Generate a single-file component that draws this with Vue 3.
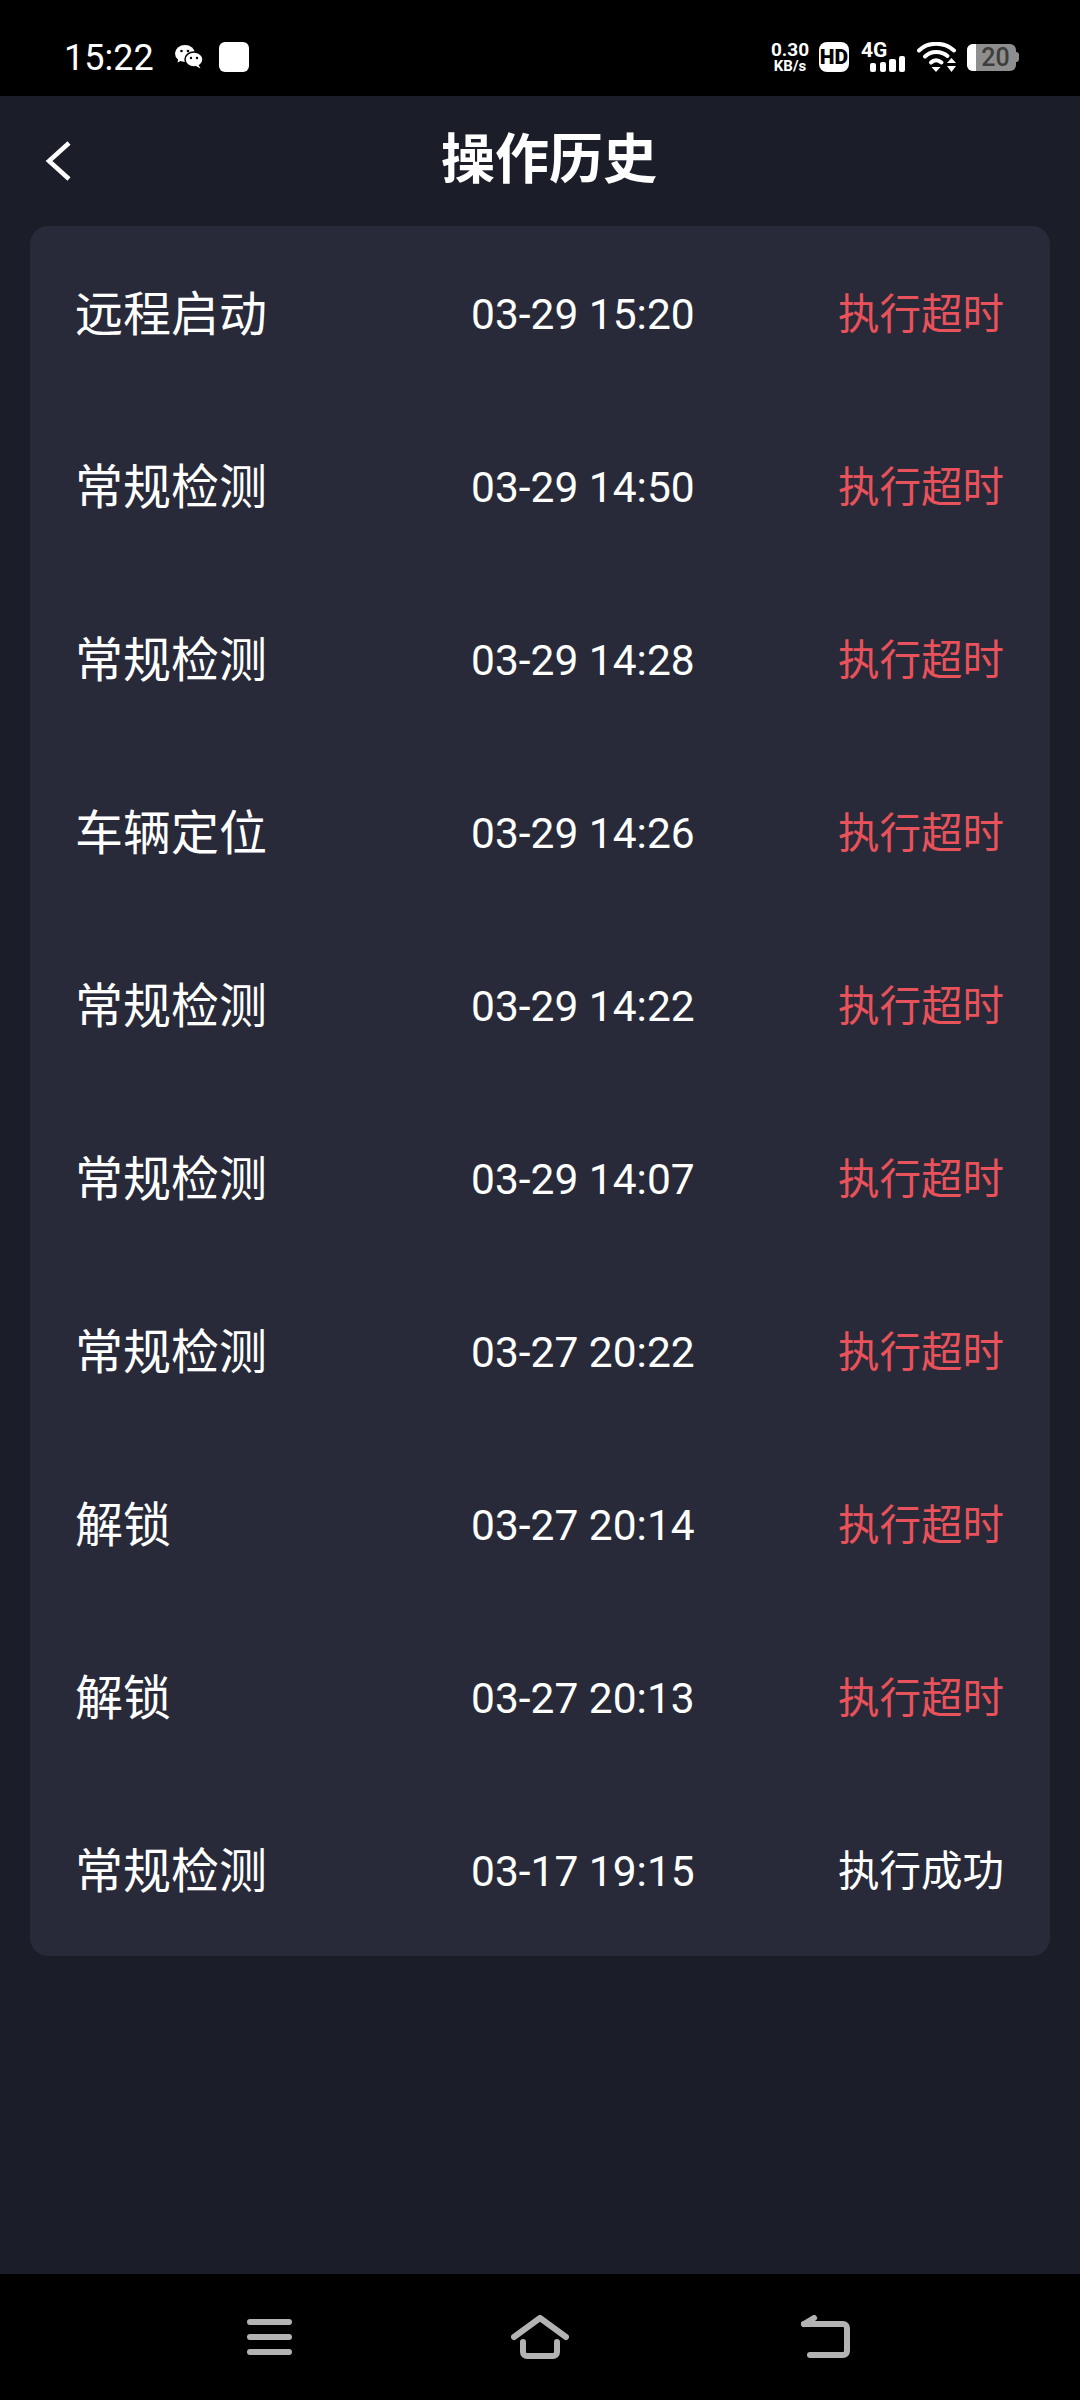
<template>
  <div class="screen">
    <div class="status">
      <div class="status__left">
        <span class="status__time">15:22</span>
        <svg class="wechat" width="28" height="24" viewBox="0 0 28 24" fill="#fff">
          <ellipse cx="10" cy="8.5" rx="10" ry="8.5"/>
          <path d="M3.5 13l-1 4.5 5-2.5z"/>
          <ellipse cx="19" cy="14.5" rx="9" ry="7.5" stroke="#000" stroke-width="1.5"/>
          <path d="M23 19l2.5 4.5-5.5-3z"/>
          <circle cx="6.5" cy="6" r="1.3" fill="#000"/>
          <circle cx="13" cy="6" r="1.3" fill="#000"/>
          <circle cx="16" cy="13" r="1.2" fill="#000"/>
          <circle cx="22" cy="13" r="1.2" fill="#000"/>
        </svg>
        <span class="status__app"></span>
      </div>
      <div class="status__right">
        <div class="speed">
          <span class="speed__num">0.30</span>
          <span class="speed__unit">KB/s</span>
        </div>
        <span class="hd">HD</span>
        <div class="signal">
          <span class="signal__label">4G</span>
          <svg class="signal__bars" width="36" height="16" viewBox="0 0 36 16" fill="#fff">
            <rect x="0" y="7" width="6" height="9" rx="2"/>
            <rect x="10" y="6" width="6" height="10" rx="2"/>
            <rect x="19" y="3" width="7" height="13" rx="2"/>
            <rect x="29" y="0" width="6" height="16" rx="2"/>
          </svg>
        </div>
        <svg class="wifi" width="40" height="30" viewBox="0 0 40 30" fill="none" stroke="#fff" stroke-width="4" stroke-linecap="round">
          <path d="M2 8.500C11 -0.500 27 -0.500 37 8.500"/>
          <path d="M8 14.500C14 8.500 24 8.500 30.500 14"/>
          <path d="M14 20.500C17 17.500 21 17.500 24.500 20.500"/>
          <path d="M14.500 25h9l-4.500 5z" fill="#fff" stroke="none"/>
          <path d="M30 21l4.500-5 4.500 5z" fill="#fff" stroke="none"/>
          <path d="M30 24h9l-4.500 6z" fill="#fff" stroke="none"/>
        </svg>
        <div class="battery">
          <div class="battery__body">
            <span class="battery__level"></span>
            <span class="battery__num">20</span>
          </div>
          <span class="battery__tip"></span>
        </div>
      </div>
    </div>

    <div class="header">
      <svg class="header__back" width="26" height="40" viewBox="0 0 26 40" fill="none" stroke="#fff" stroke-width="4.5">
        <path d="M24 2L4 20l20 18"/>
      </svg>
      <h1 class="header__title">操作历史</h1>
    </div>

    <div class="card">
      <div v-for="(item, i) in history" :key="i" class="row">
        <span class="row__name">{{ item.name }}</span>
        <span class="row__time">{{ item.time }}</span>
        <span class="row__state" :class="{ 'row__state--fail': item.state === '执行超时' }">{{ item.state }}</span>
      </div>
    </div>

    <div class="nav">
      <svg class="nav__menu" width="45" height="36" viewBox="0 0 45 36" fill="#b3b3b3">
        <rect x="0" y="0" width="45" height="6" rx="3"/>
        <rect x="0" y="15" width="45" height="6" rx="3"/>
        <rect x="0" y="30" width="45" height="6" rx="3"/>
      </svg>
      <svg class="nav__home" width="58" height="44" viewBox="0 0 58 44" fill="none" stroke="#b3b3b3" stroke-width="6" stroke-linecap="round" stroke-linejoin="round">
        <path d="M3 22L29 3l26 19"/>
        <path d="M12 27v10a4 4 0 0 0 4 4h26a4 4 0 0 0 4-4V27"/>
      </svg>
      <svg class="nav__back" width="50" height="43" viewBox="0 0 50 43" fill="none" stroke="#b3b3b3" stroke-width="6" stroke-linecap="round" stroke-linejoin="round">
        <path d="M10 40h33a4 4 0 0 0 4-4V13a4 4 0 0 0-4-4H4"/>
        <path d="M4 9l10-6"/>
      </svg>
    </div>
  </div>
</template>

<script setup>
const history = [
  { name: '远程启动', time: '03-29 15:20', state: '执行超时' },
  { name: '常规检测', time: '03-29 14:50', state: '执行超时' },
  { name: '常规检测', time: '03-29 14:28', state: '执行超时' },
  { name: '车辆定位', time: '03-29 14:26', state: '执行超时' },
  { name: '常规检测', time: '03-29 14:22', state: '执行超时' },
  { name: '常规检测', time: '03-29 14:07', state: '执行超时' },
  { name: '常规检测', time: '03-27 20:22', state: '执行超时' },
  { name: '解锁', time: '03-27 20:14', state: '执行超时' },
  { name: '解锁', time: '03-27 20:13', state: '执行超时' },
  { name: '常规检测', time: '03-17 19:15', state: '执行成功' }
]
</script>

<style>
html, body {
  margin: 0;
  background: #1b1d29;
}
</style>

<style scoped>
.screen {
  width: 1080px;
  height: 2400px;
  display: flex;
  flex-direction: column;
  background: #1b1d29;
  color: #fff;
  font-family: Roboto, "Noto Sans CJK SC", sans-serif;
  overflow: hidden;
}

.status {
  height: 96px;
  flex-shrink: 0;
  background: #000;
  display: flex;
  justify-content: space-between;
  align-items: center;
  padding: 18px 61px 0 64px;
  box-sizing: border-box;
}

.status__left {
  display: flex;
  align-items: center;
}

.status__time {
  font-size: 36px;
  line-height: 42px;
  width: 111px;
  padding-top: 2px;
}

.status__app {
  width: 30px;
  height: 30px;
  margin-left: 16px;
  background: #fff;
  border-radius: 6px;
}

.status__right {
  display: flex;
  align-items: center;
}

.speed {
  display: flex;
  flex-direction: column;
  align-items: center;
  width: 36px;
  font-weight: 700;
}

.speed__num {
  font-size: 19px;
  line-height: 18px;
}

.speed__unit {
  font-size: 15px;
  line-height: 14px;
}

.hd {
  width: 30px;
  height: 30px;
  margin-left: 11px;
  background: #fff;
  border-radius: 8px;
  color: #000;
  font-size: 21px;
  font-weight: 900;
  line-height: 30px;
  text-align: center;
}

.signal {
  width: 44px;
  height: 30px;
  margin-left: 12px;
  position: relative;
}

.signal__label {
  position: absolute;
  left: 0;
  top: -1px;
  font-size: 21px;
  line-height: 18px;
  font-weight: 700;
}

.signal__bars {
  position: absolute;
  left: 9px;
  bottom: 0;
}

.wifi {
  margin-left: 12px;
}

.battery {
  display: flex;
  align-items: center;
  margin-left: 10px;
}

.battery__body {
  position: relative;
  width: 49px;
  height: 27px;
  background: #8e8e8e;
  border-radius: 6px;
  overflow: hidden;
  display: flex;
  align-items: center;
  justify-content: center;
}

.battery__level {
  position: absolute;
  left: 0;
  top: 0;
  bottom: 0;
  width: 9px;
  background: #fff;
}

.battery__num {
  position: relative;
  padding-left: 8px;
  color: #3d3d3d;
  font-size: 25px;
  font-weight: 500;
}

.battery__tip {
  width: 3px;
  height: 10px;
  background: #8e8e8e;
  border-radius: 0 3px 3px 0;
}

.header {
  height: 130px;
  flex-shrink: 0;
  position: relative;
  display: flex;
  align-items: center;
  justify-content: center;
}

.header__back {
  position: absolute;
  left: 45px;
  top: 45px;
}

.header__title {
  margin: 0 0 0 18px;
  font-size: 54px;
  font-weight: 700;
  line-height: 70px;
}

.card {
  margin: 0 30px;
  background: #282a39;
  border-radius: 18px;
}

.row {
  height: 173px;
  display: grid;
  grid-template-columns: 396px 1fr auto;
  align-items: center;
  padding: 0 46px 0 45px;
}

.row__name {
  font-size: 48px;
  margin-bottom: 6px;
}

.row__time {
  font-size: 42.500px;
  margin-top: 3px;
}

.row__state {
  font-size: 41.500px;
  margin-bottom: 3px;
}

.row__state--fail {
  color: #e9525a;
}

.nav {
  height: 126px;
  margin-top: auto;
  flex-shrink: 0;
  background: #000;
  display: flex;
  align-items: center;
  padding: 0 0 1px 247px;
  box-sizing: border-box;
}

.nav__home {
  margin-left: 219px;
}

.nav__back {
  margin-left: 231px;
}
</style>
